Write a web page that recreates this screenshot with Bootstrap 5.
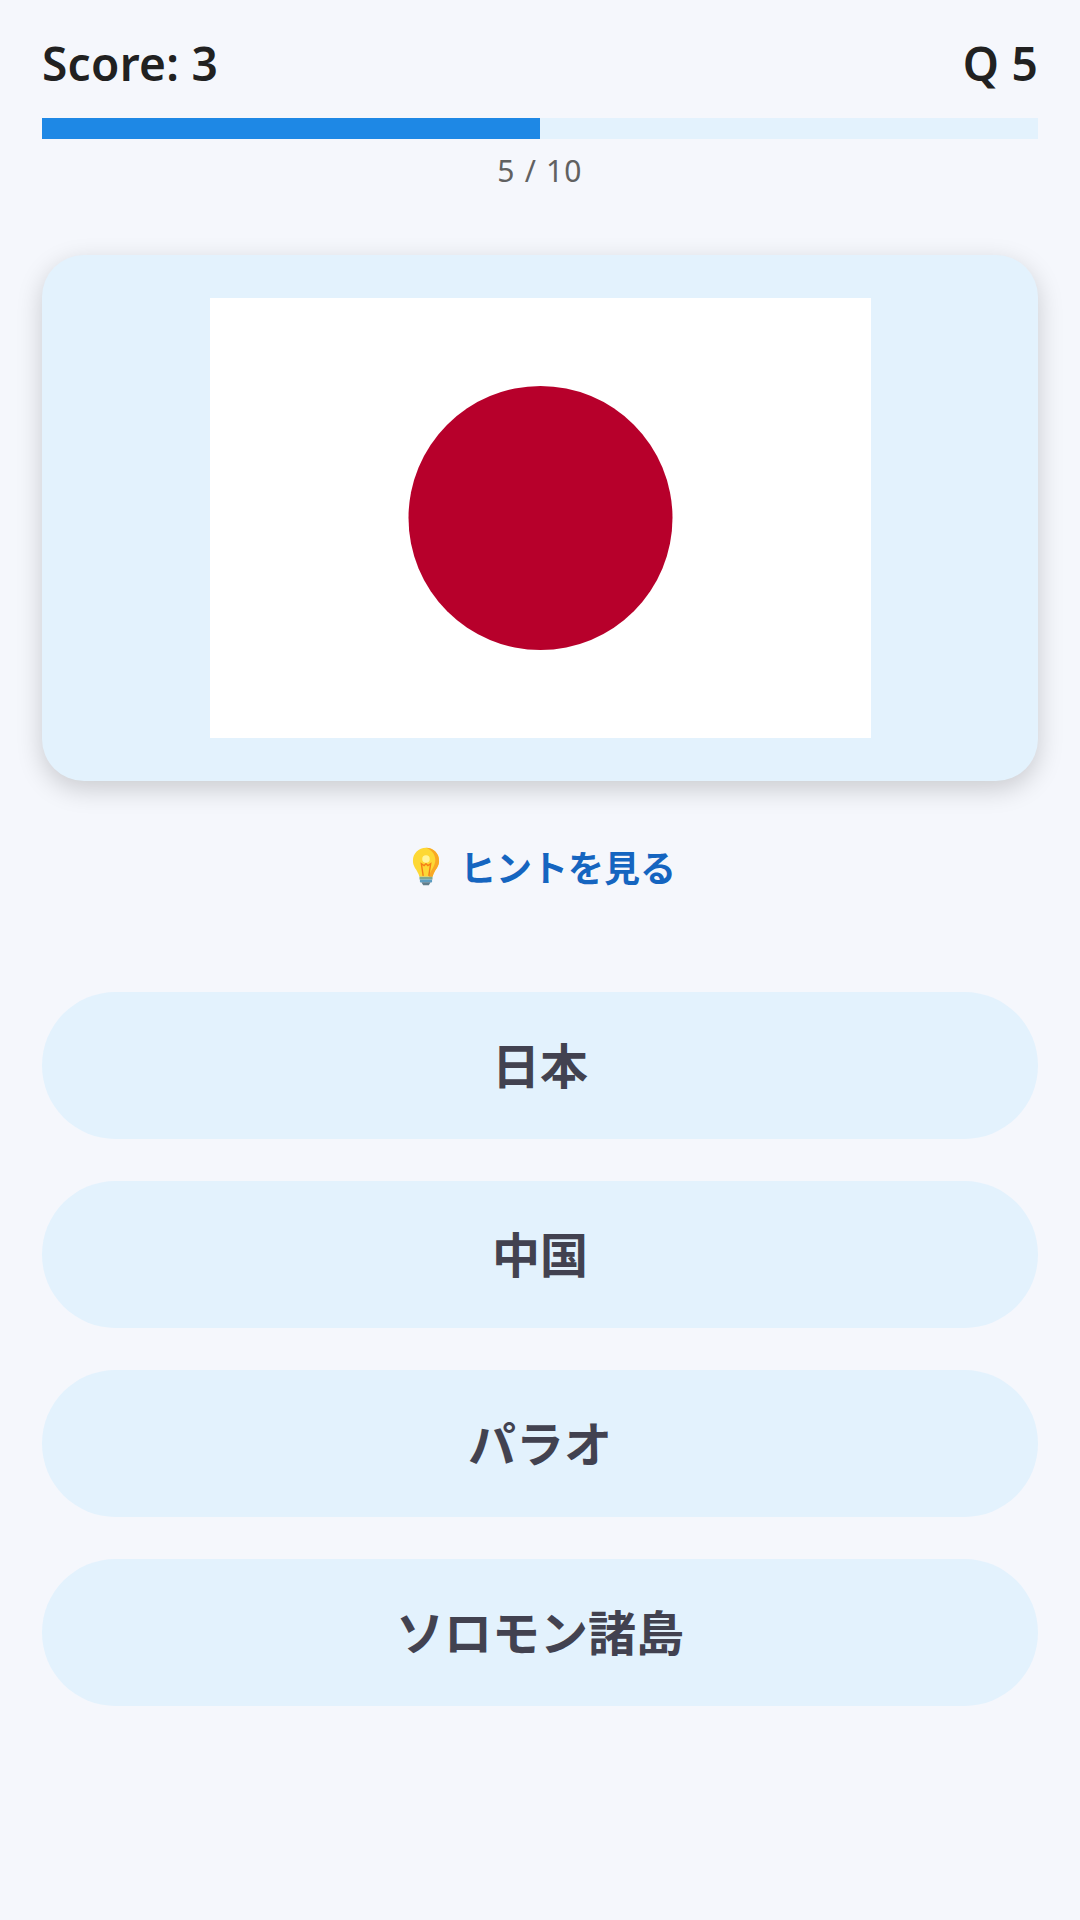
<!DOCTYPE html>
<html lang="ja">

<head>
    <meta charset="UTF-8" />
    <title>Flag Quiz</title>
    <meta name="viewport" content="width=device-width, initial-scale=1" />
    <link href="https://cdn.jsdelivr.net/npm/bootstrap@5.3.3/dist/css/bootstrap.min.css" rel="stylesheet" />
    <style>
        :root {
            --main-bg: #f5f7fc;
            --accent-bg: #e3f2fd;
            --accent-dark: #1e88e5;
            --hint-text: #1565c0;
            --answer-text: #424250;
        }

        body {
            background-color: var(--main-bg);
            font-family: "Noto Sans", "Noto Sans CJK JP", sans-serif;
            min-height: 1920px;
        }

        .quiz-screen {
            padding: 35px 42px 0;
        }

        .quiz-head {
            font-size: 46px;
            line-height: 56px;
            font-weight: 600;
            letter-spacing: 0.3px;
            color: #212121;
            margin-bottom: 27px;
        }

        .quiz-progress {
            height: 21px;
            border-radius: 0;
            background-color: var(--accent-bg);
        }

        .quiz-progress .progress-bar {
            background-color: var(--accent-dark);
        }

        .quiz-count {
            font-size: 30px;
            line-height: 40px;
            letter-spacing: 1.2px;
            color: #616161;
            margin-top: 12px;
            margin-bottom: 64px;
        }

        .flag-box {
            background-color: var(--accent-bg);
            border: 0;
            border-radius: 42px;
            padding: 43px 0;
            box-shadow: 0 8px 26px rgba(0, 0, 0, 0.18);
        }

        .flag-img {
            display: block;
            width: 661px;
            height: 440px;
        }

        .hint-link {
            font-family: "Noto Sans CJK JP", sans-serif;
            font-size: 36px;
            line-height: 50px;
            font-weight: 700;
            color: var(--hint-text);
            margin-top: 60px;
            margin-bottom: 101px;
            padding-left: 8px;
            gap: 20px;
        }

        .hint-bulb {
            width: 28px;
            height: 41px;
        }

        .answer-btn {
            height: 147px;
            padding: 0 0 6px;
            border: 0;
            border-radius: 74px;
            background-color: var(--accent-bg);
            color: var(--answer-text);
            font-family: "Noto Sans CJK JP", sans-serif;
            font-size: 48px;
            font-weight: 700;
        }

        .answer-list {
            gap: 42px;
        }
    </style>
</head>

<body>

    <div class="quiz-screen">
        <div class="d-flex justify-content-between quiz-head">
            <span>Score: 3</span>
            <span>Q 5</span>
        </div>

        <div class="progress quiz-progress">
            <div class="progress-bar" style="width: 50%"></div>
        </div>
        <div class="text-center quiz-count">5 / 10</div>

        <div class="card flag-box align-items-center">
            <svg class="flag-img" viewBox="0 0 661 440" role="img" aria-label="flag">
                <rect width="661" height="440" fill="#ffffff" />
                <circle cx="330.5" cy="220" r="132" fill="#b7002b" />
            </svg>
        </div>

        <div class="d-flex justify-content-center align-items-center hint-link">
            <svg class="hint-bulb" viewBox="0 0 30 42">
                <path d="M15 1C7 1 1 7 1 15c0 6 4 9 6 14 .5 1.500 1 3 1 3h14s.5-1.500 1-3c2-5 6-8 6-14C29 7 23 1 15 1z" fill="#fdd835" />
                <path d="M15 1c8 0 14 6 14 14 0 6-4 9-6 14-.5 1.500-1 3-1 3h-4c1-6 7-11 7-18 0-6-4-11-10-13z" fill="#f9a825" />
                <path d="M12 31l-2-13 3 2 2-2 2 2 3-2-2 13" fill="none" stroke="#f57f17" stroke-width="1.500" />
                <circle cx="15" cy="13" r="4" fill="#fff59d" />
                <path d="M8 32h14v3H8z" fill="#81a88d" />
                <path d="M8.500 35h13v3h-13z" fill="#5c9cc0" />
                <path d="M10 38h10l-2 3h-6z" fill="#607d8b" />
            </svg>
            <span>ヒントを見る</span>
        </div>

        <div class="d-flex flex-column answer-list">
            <button type="button" class="btn answer-btn">日本</button>
            <button type="button" class="btn answer-btn">中国</button>
            <button type="button" class="btn answer-btn">パラオ</button>
            <button type="button" class="btn answer-btn">ソロモン諸島</button>
        </div>
    </div>

    <script src="https://cdn.jsdelivr.net/npm/bootstrap@5.3.3/dist/js/bootstrap.bundle.min.js"></script>
</body>

</html>
